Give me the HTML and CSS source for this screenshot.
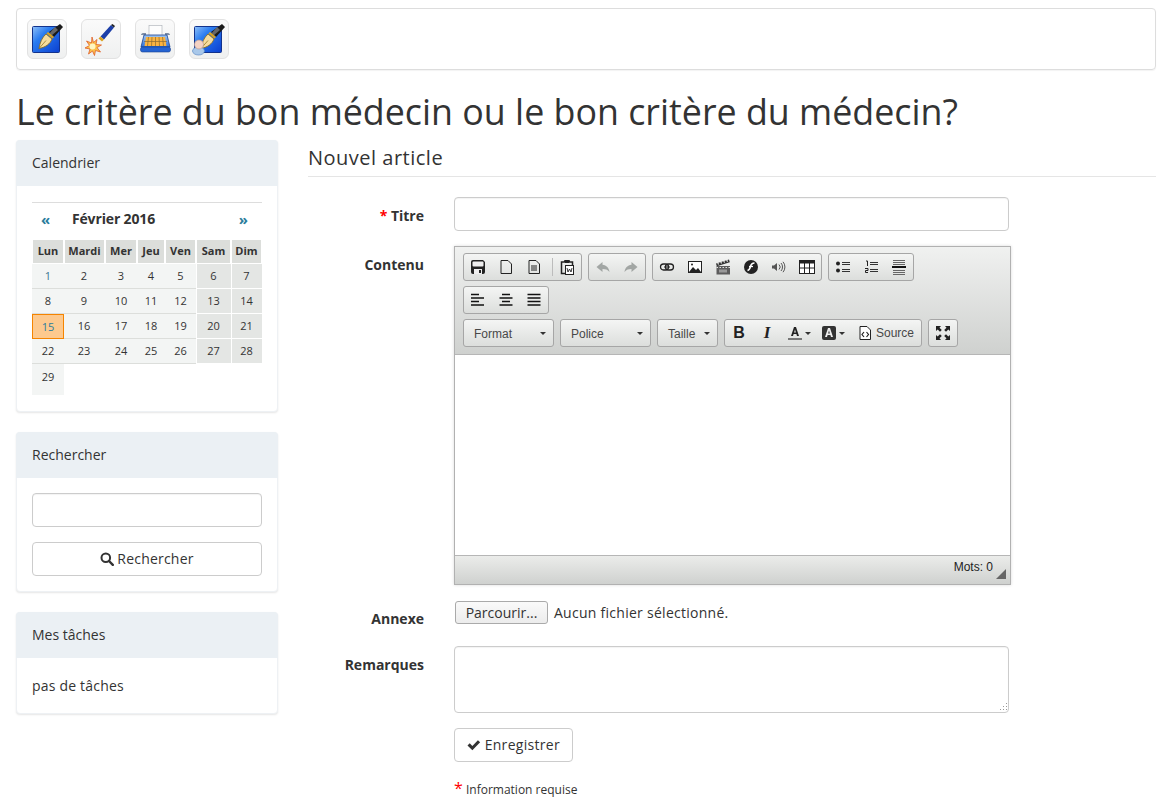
FILE: index.html
```html
<!DOCTYPE html>
<html lang="fr">
<head>
<meta charset="utf-8">
<title>Nouvel article</title>
<link rel="stylesheet" href="styles.css">
</head>
<body>
<svg class="defs" width="0" height="0" aria-hidden="true">
	<defs>
		<linearGradient id="blueSquare" x1="0" y1="0" x2="1" y2="1">
			<stop offset="0" stop-color="#8fc0f8"/>
			<stop offset="0.35" stop-color="#2a7cf0"/>
			<stop offset="1" stop-color="#0b3fd0"/>
		</linearGradient>
		<linearGradient id="typeBody" x1="0" y1="0" x2="0" y2="1">
			<stop offset="0" stop-color="#a4c8f0"/>
			<stop offset="1" stop-color="#2a6fdc"/>
		</linearGradient>
		<symbol id="pen" viewBox="0 0 40 40">
			<path d="M33 5l3 3-9 10-5-5z" fill="#1b1b1b"/>
			<path d="M28 8l3 3-7 6-2-2z" fill="#666"/>
			<path d="M21 13l6 5-1.500 1.500-6-5z" fill="#d9a21f"/>
			<path d="M19 15l6 5c-2 5-6 8-13 9.500 1-6 3-11 7-14.500z" fill="#f6dc9e" stroke="#8a6a14" stroke-width=".8"/>
			<path d="M12 29.500l7-8" stroke="#8a6a14" stroke-width=".7"/>
		</symbol>
	</defs>
</svg>

<div class="topbar">
	<a class="tool" href="#">
		<svg viewBox="0 0 40 40" width="40" height="40">
			<rect x="5.500" y="7.500" width="27" height="26" rx="1" fill="url(#blueSquare)" stroke="#12328c"/>
			<use href="#pen" width="40" height="40"/>
		</svg>
	</a>
	<a class="tool" href="#">
		<svg viewBox="0 0 40 40" width="40" height="40">
			<path d="M30 6l3 2.500-10 12-3.500-3z" fill="#1c3fa8"/>
			<path d="M30 6l1.500-1 2.500 2-1 1.500z" fill="#222"/>
			<path d="M19.500 17.500l3.500 3-2 2-3.500-3z" fill="#d9a21f"/>
			<path d="M11 18l1.500 5.500 3.500-3-1 5 5.500.5-4.500 2.500 3.500 4.500-5-1.500-1 5-2-4.500-4 3 1.500-5-5-1 4.500-2.500-3-4.500 5 2z" fill="#fbc04a" stroke="#e0602a" stroke-width=".8"/>
			<circle cx="11.500" cy="27.500" r="3" fill="#fff6c0"/>
		</svg>
	</a>
	<a class="tool" href="#">
		<svg viewBox="0 0 40 40" width="40" height="40">
			<rect x="14" y="6.500" width="13" height="11" fill="#fdfdfd" stroke="#a8adb4" stroke-width=".6"/>
			<path d="M6 16c0-1 1-2 2-2h3v2zM35 16c0-1-1-2-2-2h-3v2z" fill="#7d8da5"/>
			<path d="M9 16h23l3 12H6z" fill="url(#typeBody)" stroke="#17408f" stroke-width=".8"/>
			<path d="M11 18h19l1.500 9h-22z" fill="#fab340"/>
			<path d="M9 22.500h23M13.500 18l-1 9M17 18l-.5 9M20.500 18v9M24 18l.5 9M27.500 18l1 9" stroke="#8a6a30" stroke-width=".7"/>
			<rect x="5.500" y="28" width="30" height="5" rx="2" fill="#2463d2" stroke="#17408f" stroke-width=".6"/>
		</svg>
	</a>
	<a class="tool" href="#">
		<svg viewBox="0 0 40 40" width="40" height="40">
			<rect x="5.500" y="7.500" width="27" height="26" rx="1" fill="url(#blueSquare)" stroke="#12328c"/>
			<use href="#pen" width="40" height="40"/>
			<ellipse cx="9.500" cy="32" rx="6" ry="4" fill="#a9c8ea" stroke="#5f8bc4" stroke-width=".7"/>
			<circle cx="10" cy="25.500" r="4.500" fill="#f4d2c4" stroke="#b89890" stroke-width=".7"/>
		</svg>
	</a>
</div>

<h1 class="page-title">Le critère du bon médecin ou le bon critère du médecin?</h1>

<div class="layout">
	<aside class="sidebar">
		<section class="panel">
			<h2 class="panel-head">Calendrier</h2>
			<div class="panel-body cal-body">
				<div class="cal-nav">
					<a href="#">«</a>
					<strong>Février 2016</strong>
					<a href="#">»</a>
				</div>
				<table class="cal">
					<tr>
						<th class="c1">Lun</th><th class="c2">Mardi</th><th class="c3">Mer</th><th class="c4">Jeu</th><th class="c5">Ven</th><th class="c6">Sam</th><th class="c7">Dim</th>
					</tr>
					<tr class="r1">
						<td class="link">1</td><td>2</td><td>3</td><td>4</td><td>5</td><td class="we">6</td><td class="we">7</td>
					</tr>
					<tr>
						<td>8</td><td>9</td><td>10</td><td>11</td><td>12</td><td class="we">13</td><td class="we">14</td>
					</tr>
					<tr>
						<td class="today">15</td><td>16</td><td>17</td><td>18</td><td>19</td><td class="we">20</td><td class="we">21</td>
					</tr>
					<tr>
						<td>22</td><td>23</td><td>24</td><td>25</td><td>26</td><td class="we">27</td><td class="we">28</td>
					</tr>
					<tr class="last">
						<td>29</td>
					</tr>
				</table>
			</div>
		</section>

		<section class="panel">
			<h2 class="panel-head">Rechercher</h2>
			<div class="panel-body search-body">
				<input class="field" type="text">
				<button class="btn btn-full" type="button">
					<svg width="14" height="14" viewBox="0 0 14 14"><circle cx="5.800" cy="5.800" r="4.300" fill="none" stroke="#333" stroke-width="2"/><path d="M9 9l3.800 3.800" stroke="#333" stroke-width="2.400" stroke-linecap="round"/></svg>
					Rechercher
				</button>
			</div>
		</section>

		<section class="panel">
			<h2 class="panel-head">Mes tâches</h2>
			<div class="panel-body tasks-body">pas de tâches</div>
		</section>
	</aside>

	<main class="content">
		<h3 class="content-title">Nouvel article</h3>

		<div class="row row-titre">
			<label class="lbl"><span class="req">*</span> Titre</label>
			<input class="field" type="text">
		</div>

		<div class="row row-contenu">
			<label class="lbl">Contenu</label>
			<div class="editor">
				<div class="ed-top">
					<div class="ed-line">
						<span class="ed-group">
							<a class="ed-btn"><svg viewBox="0 0 16 16"><path d="M1 3a2 2 0 0 1 2-2h10l2 2v10a2 2 0 0 1-2 2H3a2 2 0 0 1-2-2z" fill="#222"/><rect x="2.500" y="2.500" width="11" height="5" rx="1" fill="#eee"/><rect x="4" y="10" width="8" height="5" fill="#eee"/><rect x="9" y="11" width="2" height="3" fill="#222"/></svg></a>
							<a class="ed-btn"><svg viewBox="0 0 16 16"><path d="M3 1.500h7l3.500 3.500v9.500H3z" fill="none" stroke="#222"/></svg></a>
							<a class="ed-btn"><svg viewBox="0 0 16 16"><path d="M3 1.500h7l3.500 3.500v9.500H3z" fill="none" stroke="#222"/><path d="M5 7h6M5 9h6M5 11h6" stroke="#222"/></svg></a>
							<span class="ed-sep"></span>
							<a class="ed-btn"><svg viewBox="0 0 16 16"><path d="M5 3H2.500v11.500H6" fill="none" stroke="#222" stroke-width="1.500"/><path d="M11 3h2.500v3" fill="none" stroke="#222" stroke-width="1.500"/><rect x="5" y="1" width="6" height="3" rx="1" fill="#222"/><rect x="6.500" y="6.500" width="8" height="9" fill="#fff" stroke="#222"/><path d="M8 9l1 4 1.500-3 1.500 3 1-4" fill="none" stroke="#222" stroke-width=".9"/></svg></a>
						</span>
						<span class="ed-group">
							<a class="ed-btn off"><svg viewBox="0 0 16 16"><path d="M7.500 3L1.500 8l6 5v-3c3 0 5 .6 7 3-.5-4-3-7-7-7.300z" fill="#a2a6a4"/></svg></a>
							<a class="ed-btn off"><svg viewBox="0 0 16 16"><path d="M8.500 3l6 5-6 5v-3c-3 0-5 .6-7 3 .5-4 3-7 7-7.300z" fill="#a2a6a4"/></svg></a>
						</span>
						<span class="ed-group">
							<a class="ed-btn"><svg viewBox="0 0 16 16"><rect x="1.500" y="5" width="8" height="6" rx="3" fill="none" stroke="#222" stroke-width="1.300"/><rect x="6.500" y="5" width="8" height="6" rx="3" fill="none" stroke="#222" stroke-width="1.300"/><path d="M5 8h6" stroke="#222"/></svg></a>
							<a class="ed-btn"><svg viewBox="0 0 16 16"><rect x="1.500" y="2.500" width="13" height="11" fill="#fff" stroke="#222"/><path d="M2 13l4-5 3 3 2-2 3 4z" fill="#222"/><circle cx="5" cy="5.500" r="1" fill="#222"/></svg></a>
							<a class="ed-btn"><svg viewBox="0 0 16 16"><rect x="1.500" y="7" width="13.500" height="8.500" fill="#5c5c5c"/><path d="M1 4.500L14 .5l.8 2.800L1.800 7.200z" fill="#333"/><path d="M3.500 5.500l-.8-2M6.500 4.500l-.8-2M9.500 3.600l-.8-2M12.500 2.700l-.8-2" stroke="#eee" stroke-width="1.100"/><path d="M1.500 8.500h13.500" stroke="#ddd" stroke-dasharray="1.500 1.500"/><rect x="4" y="10.500" width="8" height="3" fill="#999"/></svg></a>
							<a class="ed-btn"><svg viewBox="0 0 16 16"><circle cx="8" cy="8" r="7" fill="#222"/><path d="M11.500 4C8.500 4 8 5.500 7.500 7.500S6.500 11 4.500 11.500" fill="none" stroke="#fff" stroke-width="1.600"/><path d="M6 7.500h4" stroke="#fff" stroke-width="1.300"/></svg></a>
							<a class="ed-btn"><svg viewBox="0 0 16 16"><path d="M1 6.500h2l3-2.500v8l-3-2.500H1z" fill="#555"/><path d="M8 5.500a3.500 3.500 0 0 1 0 5M10 4a6 6 0 0 1 0 8M12 2.800a8 8 0 0 1 0 10.400" fill="none" stroke="#555"/></svg></a>
							<a class="ed-btn"><svg viewBox="0 0 16 16"><rect x=".5" y="1.500" width="15" height="13" fill="#fff" stroke="#222"/><rect x="0" y="1" width="16" height="3.500" fill="#222"/><path d="M0 9h16M5.500 4v10M10.500 4v10" stroke="#222"/></svg></a>
						</span>
						<span class="ed-group">
							<a class="ed-btn"><svg viewBox="0 0 16 16"><circle cx="3" cy="4.500" r="2" fill="#222"/><circle cx="3" cy="11.500" r="2" fill="#222"/><path d="M7 3.500h8M7 5.500h8M7 10.500h8M7 12.500h8" stroke="#333"/></svg></a>
							<a class="ed-btn"><svg viewBox="0 0 16 16"><path d="M3 2h1.500v5M2 9.500h3v2H2.500v2H5" fill="none" stroke="#222"/><path d="M7 3.500h8M7 5.500h8M7 10.500h8M7 12.500h8" stroke="#333"/></svg></a>
							<a class="ed-btn"><svg viewBox="0 0 16 16"><path d="M2 1.500h12M2 3.500h12M2 5.500h12M2 11.500h12M2 13.500h12M2 15.500h12" stroke="#666"/><path d="M1 8h14" stroke="#111" stroke-width="2"/></svg></a>
						</span>
					</div>
					<div class="ed-line">
						<span class="ed-group">
							<a class="ed-btn"><svg viewBox="0 0 16 16"><path d="M1 2.500h8M1 6h13M1 9.500h8M1 13h13" stroke="#111" stroke-width="1.600"/></svg></a>
							<a class="ed-btn"><svg viewBox="0 0 16 16"><path d="M4 2.500h8M1.500 6h13M4 9.500h8M1.500 13h13" stroke="#111" stroke-width="1.600"/></svg></a>
							<a class="ed-btn"><svg viewBox="0 0 16 16"><path d="M1.500 2.500h13M1.500 6h13M1.500 9.500h13M1.500 13h13" stroke="#111" stroke-width="1.600"/></svg></a>
						</span>
					</div>
					<div class="ed-line">
						<span class="ed-group ed-combo w-format"><span>Format</span><i class="caret"></i></span>
						<span class="ed-group ed-combo w-police"><span>Police</span><i class="caret"></i></span>
						<span class="ed-group ed-combo w-taille"><span>Taille</span><i class="caret"></i></span>
						<span class="ed-group">
							<a class="ed-btn"><b class="ed-bold">B</b></a>
							<a class="ed-btn"><i class="ed-ital">I</i></a>
							<a class="ed-btn ed-color"><svg viewBox="0 0 16 16"><path d="M4 11l3-9h2l3 9h-2l-.6-2H6.600L6 11zM7.100 7.500h1.800L8 4.500z" fill="#222"/><rect x="1" y="13" width="14" height="2" fill="#777"/></svg><i class="caret"></i></a>
							<a class="ed-btn ed-color ed-bg"><svg viewBox="0 0 16 16"><rect x="1" y="1" width="14" height="14" rx="2" fill="#333"/><path d="M4 12l3-9h2l3 9h-2l-.6-2H6.600L6 12zM7.100 8.500h1.800L8 5.500z" fill="#eee"/></svg><i class="caret"></i></a>
							<a class="ed-btn ed-source"><svg viewBox="0 0 16 16"><path d="M3 1.500h7l3.500 3.500v9.500H3z" fill="#fff" stroke="#222"/><path d="M7 7L5 9.500 7 12M9.500 7l2 2.500-2 2.500" fill="none" stroke="#222" stroke-width="1.200"/></svg><span>Source</span></a>
						</span>
						<span class="ed-group">
							<a class="ed-btn"><svg viewBox="0 0 16 16"><path d="M1 1h5L4.500 2.700l2.300 2.300-1.800 1.800L2.700 4.500 1 6zM15 1v5l-1.700-1.500-2.300 2.300L9.200 5l2.300-2.300L10 1zM1 15v-5l1.700 1.500L5 9.200 6.800 11l-2.300 2.300L6 15zM15 15h-5l1.500-1.700L9.200 11 11 9.200l2.300 2.300L15 10z" fill="#222"/></svg></a>
						</span>
					</div>
				</div>
				<div class="ed-area"></div>
				<div class="ed-bottom">
					<span class="ed-count">Mots: 0</span>
					<i class="ed-resize"></i>
				</div>
			</div>
		</div>

		<div class="row row-annexe">
			<label class="lbl">Annexe</label>
			<div class="filepick">
				<button class="file-btn" type="button">Parcourir...</button>
				<span class="file-name">Aucun fichier sélectionné.</span>
			</div>
		</div>

		<div class="row row-remarques">
			<label class="lbl">Remarques</label>
			<div class="area-wrap">
				<textarea class="field area"></textarea>
				<svg class="grip" width="10" height="10" viewBox="0 0 10 10"><path d="M8 1h1v1H8zM5 4h1v1H5zM8 4h1v1H8zM2 7h1v1H2zM5 7h1v1H5zM8 7h1v1H8z" fill="#999"/></svg>
			</div>
		</div>

		<div class="row row-save">
			<span></span>
			<div>
				<button class="btn btn-save" type="button">
					<svg width="14" height="14" viewBox="0 0 14 14"><path d="M.5 7.500l2.300-2.300 2.700 2.700L11.200 2 13.500 4.300l-8 8z" fill="#333"/></svg>
					Enregistrer
				</button>
				<p class="note"><span class="req">*</span> Information requise</p>
			</div>
		</div>
	</main>
</div>
</body>
</html>
```

FILE: styles.css
```css
* { box-sizing: border-box; }

body {
	margin: 0;
	padding: 8px 9px 0 16px;
	background: #fff;
	color: #333;
	font-family: "Open Sans", sans-serif;
	font-size: 14px;
	line-height: 20px;
	overflow: hidden;
}

.defs { position: absolute; }

a { text-decoration: none; }

/* barre du haut */
.topbar {
	display: flex;
	gap: 14px;
	height: 62px;
	padding: 10px;
	border: 1px solid #ddd;
	border-radius: 4px;
	box-shadow: 0 1px 1px rgba(0, 0, 0, .05);
}

.tool {
	display: block;
	width: 40px;
	height: 40px;
	border: 1px solid #e2e2e2;
	border-radius: 6px;
	background: linear-gradient(#fafafa, #eff0f0);
	overflow: hidden;
}

.tool svg { display: block; margin: -1px; }

.page-title {
	margin: 19px 0 7px;
	font-size: 35.800px;
	font-weight: 400;
	line-height: 44px;
}

.layout {
	display: flex;
	gap: 30px;
}

/* colonne de gauche */
.sidebar { width: 262px; flex: none; }

.panel {
	margin-bottom: 20px;
	border: 1px solid #eef1f4;
	border-radius: 4px;
	box-shadow: 0 1px 2px rgba(0, 0, 0, .1);
	background: #fff;
}

.panel-head {
	height: 46px;
	margin: -1px -1px 0;
	padding: 13px 16px;
	background: #ebf0f4;
	border-radius: 4px 4px 0 0;
	font-size: 14px;
	font-weight: 400;
	line-height: 20px;
}

.panel-body { padding: 15px; }

.cal-body { height: 225px; padding-top: 16px; }

.cal-nav {
	display: flex;
	justify-content: space-between;
	height: 37px;
	padding: 6px 14px 0 9px;
	border-top: 1px solid #ddd;
	font-size: 14px;
}

.cal-nav a {
	color: #2a7d9c;
	font-weight: 700;
	font-size: 15px;
}

.cal-nav strong {
	margin-right: 62px;
	letter-spacing: -.15px;
}

.cal {
	width: 230px;
	table-layout: fixed;
	border-collapse: separate;
	border-spacing: 0;
	font-size: 11px;
	line-height: 14px;
}

.cal th {
	height: 25px;
	padding: 0 0 1px;
	border: solid #fff;
	border-width: 1px;
	background: #dcdedb;
	font-weight: 700;
	color: #333;
}

.c1 { width: 32px; }
.c2 { width: 41px; }
.c3 { width: 32px; }
.c4 { width: 28px; }
.c5 { width: 31px; }
.c6 { width: 35px; }
.c7 { width: 31px; }

.cal td {
	height: 25px;
	padding: 0;
	text-align: center;
	background: #f3f5f4;
	border-bottom: 1px solid #dcdedb;
}

.cal td:nth-child(2) { padding-right: 1px; }

.cal td.link { color: #3a7690; }

.cal td.we {
	padding-right: 1px;
	background: #e4e6e4;
	border: solid #fff;
	border-width: 0 0 1px 1px;
}

.cal td.today {
	background: #fdc98e;
	border: 1px solid #f58400;
	color: #2a7d9c;
}

.cal .last td {
	height: 31px;
	border-bottom: 0;
	padding-bottom: 6px;
}

.search-body {
	display: flex;
	flex-direction: column;
	gap: 15px;
	height: 113px;
}

.tasks-body {
	height: 55px;
	padding-top: 18px;
	letter-spacing: .2px;
}

/* champs */
.field {
	display: block;
	width: 100%;
	height: 34px;
	padding: 6px 12px;
	border: 1px solid #ccc;
	border-radius: 4px;
	background: #fff;
	font: inherit;
	box-shadow: inset 0 1px 1px rgba(0, 0, 0, .05);
}

.area {
	height: 67px;
	resize: none;
}

.area-wrap { position: relative; }

.grip {
	position: absolute;
	right: 1px;
	bottom: 1px;
}

.btn {
	display: inline-flex;
	align-items: center;
	justify-content: center;
	gap: 3px;
	height: 34px;
	padding: 0 12px;
	border: 1px solid #ccc;
	border-radius: 4px;
	background: #fff;
	color: #333;
	font: inherit;
	letter-spacing: .2px;
}

.btn-full { width: 100%; }

.btn-save {
	width: 119px;
	gap: 4px;
	letter-spacing: .3px;
}

/* colonne principale */
.content { width: 848px; flex: none; }

.content-title {
	height: 37px;
	margin: 0 0 20px;
	padding-top: 4px;
	border-bottom: 1px solid #e5e5e5;
	font-size: 20px;
	font-weight: 400;
	line-height: 28px;
	letter-spacing: .5px;
}

.row {
	display: grid;
	grid-template-columns: 116px 555px;
	column-gap: 30px;
}

.lbl {
	padding-top: 9px;
	text-align: right;
	font-weight: 700;
}

.req { color: #f00; }

.row-contenu { margin-top: 15px; }
.row-annexe { margin-top: 16px; }
.row-remarques { margin-top: 17px; }
.row-save { margin-top: 15px; }

.row-annexe .lbl { padding-top: 8px; }

/* editeur */
.editor {
	width: 557px;
	border: 1px solid #b1b1b1;
	box-shadow: 0 0 3px rgba(0, 0, 0, .15);
	font-family: "Liberation Sans", sans-serif;
}

.ed-top {
	height: 108px;
	padding: 6px 8px 0;
	background: linear-gradient(#f0f1f0, #cfd1cf);
	border-bottom: 1px solid #b6b6b6;
}

.ed-line {
	display: flex;
	gap: 6px;
	height: 28px;
	margin-bottom: 5px;
}

.ed-group {
	display: flex;
	align-items: center;
	height: 28px;
	border: 1px solid #a6a6a6;
	border-radius: 3px;
	background: linear-gradient(#f4f5f4, #dcdedc);
}

.ed-btn {
	display: flex;
	align-items: center;
	justify-content: center;
	width: 28px;
	height: 26px;
	color: #333;
}

.ed-btn svg { width: 16px; height: 16px; flex: none; }

.ed-sep {
	width: 1px;
	height: 18px;
	margin: 0 3px 0 4px;
	background: #bcbcbc;
}

.ed-sep + .ed-btn { width: 28px; margin-left: -3px; }

.ed-combo {
	justify-content: space-between;
	padding: 1px 7px 0 10px;
	color: #484848;
	font-size: 12px;
}

.w-format, .w-police { width: 91px; }
.w-taille { width: 61px; }

.caret {
	display: inline-block;
	width: 0;
	height: 0;
	border: 3px solid transparent;
	border-top-color: #333;
	border-bottom: 0;
}

.ed-bold {
	font-family: "Liberation Sans", sans-serif;
	font-size: 16px;
	font-weight: 700;
	color: #222;
}

.ed-ital {
	font-family: "Liberation Serif", serif;
	font-size: 17px;
	font-weight: 700;
	font-style: italic;
	color: #222;
}

.ed-color {
	gap: 2px;
	justify-content: flex-start;
	padding-left: 6px;
	width: 34px;
}

.ed-source {
	width: auto;
	gap: 3px;
	padding: 0 7px 0 8px;
	font-size: 12px;
	color: #484848;
}

.ed-area { height: 200px; background: #fff; }

.ed-bottom {
	display: flex;
	justify-content: flex-end;
	position: relative;
	height: 29px;
	padding: 3px 17px 0 0;
	border-top: 1px solid #b6b6b6;
	background: linear-gradient(#ebecea, #cfd1cf);
	font-size: 12px;
	line-height: 16px;
	color: #222;
}

.ed-resize {
	position: absolute;
	right: 4px;
	bottom: 5px;
	width: 0;
	height: 0;
	border-style: solid;
	border-width: 0 0 10px 10px;
	border-color: transparent transparent #666 transparent;
}

/* fichier */
.filepick {
	display: flex;
	align-items: center;
	gap: 6px;
	height: 23px;
}

.file-btn {
	width: 93px;
	height: 23px;
	margin-left: 1px;
	padding: 0;
	border: 1px solid #aaa;
	border-radius: 3px;
	background: linear-gradient(#fafafa, #ececec);
	color: #333;
	font: inherit;
}

.file-name { letter-spacing: .27px; }

.note {
	margin: 16px 0 0;
	font-size: 12px;
	line-height: 20px;
}

.note .req { font-size: 16px; }
```
